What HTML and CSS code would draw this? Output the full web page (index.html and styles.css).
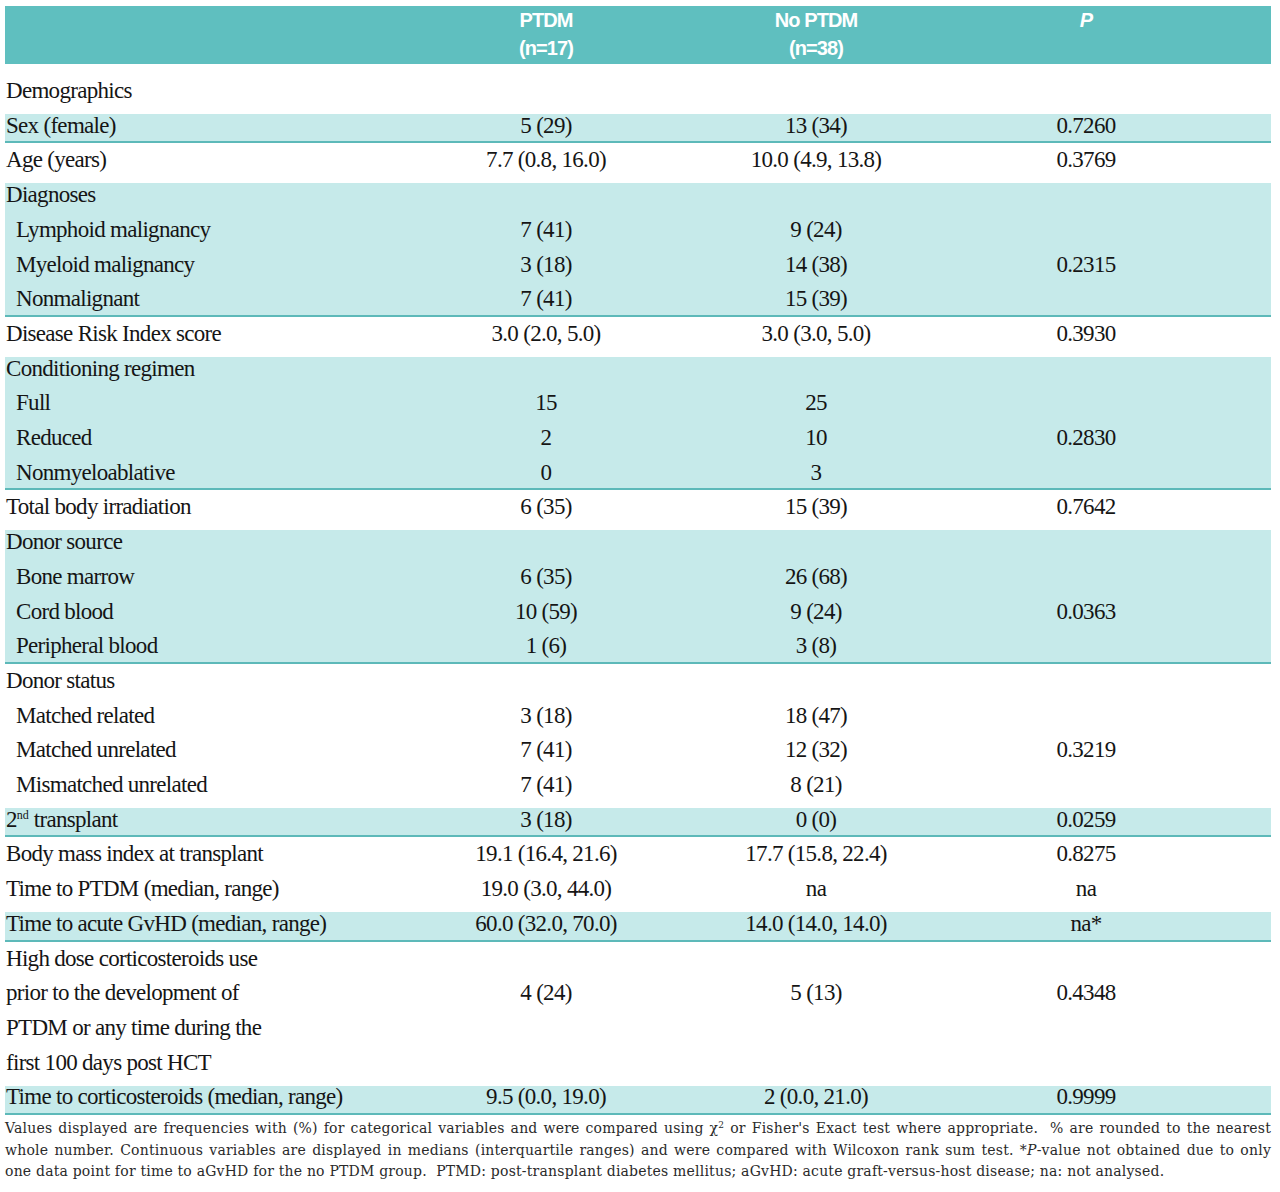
FILE: index.html
```html
<!DOCTYPE html>
<html lang="en">
<head>
<meta charset="utf-8">
<title>PTDM characteristics</title>
<link rel="stylesheet" href="styles.css">
</head>
<body>
<div class="wrap">
  <div class="head">
    <div class="hc"></div>
    <div class="hc">PTDM<br>(n=17)</div>
    <div class="hc">No PTDM<br>(n=38)</div>
    <div class="hc"><i>P</i></div>
    <div class="hc"></div>
  </div>

  <div class="body">
    <div class="row"><div class="lab">Demographics</div><div></div><div></div><div></div></div>

    <div class="band">
      <div class="row"><div class="lab">Sex (female)</div><div>5 (29)</div><div>13 (34)</div><div>0.7260</div></div>
    </div>

    <div class="row"><div class="lab">Age (years)</div><div>7.7 (0.8, 16.0)</div><div>10.0 (4.9, 13.8)</div><div>0.3769</div></div>

    <div class="band">
      <div class="row"><div class="lab">Diagnoses</div><div></div><div></div><div></div></div>
      <div class="row"><div class="lab sub">Lymphoid malignancy</div><div>7 (41)</div><div>9 (24)</div><div></div></div>
      <div class="row"><div class="lab sub">Myeloid malignancy</div><div>3 (18)</div><div>14 (38)</div><div>0.2315</div></div>
      <div class="row"><div class="lab sub">Nonmalignant</div><div>7 (41)</div><div>15 (39)</div><div></div></div>
    </div>

    <div class="row"><div class="lab">Disease Risk Index score</div><div>3.0 (2.0, 5.0)</div><div>3.0 (3.0, 5.0)</div><div>0.3930</div></div>

    <div class="band">
      <div class="row"><div class="lab">Conditioning regimen</div><div></div><div></div><div></div></div>
      <div class="row"><div class="lab sub">Full</div><div>15</div><div>25</div><div></div></div>
      <div class="row"><div class="lab sub">Reduced</div><div>2</div><div>10</div><div>0.2830</div></div>
      <div class="row"><div class="lab sub">Nonmyeloablative</div><div>0</div><div>3</div><div></div></div>
    </div>

    <div class="row"><div class="lab">Total body irradiation</div><div>6 (35)</div><div>15 (39)</div><div>0.7642</div></div>

    <div class="band">
      <div class="row"><div class="lab">Donor source</div><div></div><div></div><div></div></div>
      <div class="row"><div class="lab sub">Bone marrow</div><div>6 (35)</div><div>26 (68)</div><div></div></div>
      <div class="row"><div class="lab sub">Cord blood</div><div>10 (59)</div><div>9 (24)</div><div>0.0363</div></div>
      <div class="row"><div class="lab sub">Peripheral blood</div><div>1 (6)</div><div>3 (8)</div><div></div></div>
    </div>

    <div class="row"><div class="lab">Donor status</div><div></div><div></div><div></div></div>
    <div class="row"><div class="lab sub">Matched related</div><div>3 (18)</div><div>18 (47)</div><div></div></div>
    <div class="row"><div class="lab sub">Matched unrelated</div><div>7 (41)</div><div>12 (32)</div><div>0.3219</div></div>
    <div class="row"><div class="lab sub">Mismatched unrelated</div><div>7 (41)</div><div>8 (21)</div><div></div></div>

    <div class="band">
      <div class="row"><div class="lab">2<sup class="ord">nd</sup> transplant</div><div>3 (18)</div><div>0 (0)</div><div>0.0259</div></div>
    </div>

    <div class="row"><div class="lab">Body mass index at transplant</div><div>19.1 (16.4, 21.6)</div><div>17.7 (15.8, 22.4)</div><div>0.8275</div></div>
    <div class="row"><div class="lab">Time to PTDM (median, range)</div><div>19.0 (3.0, 44.0)</div><div>na</div><div>na</div></div>

    <div class="band">
      <div class="row"><div class="lab">Time to acute GvHD (median, range)</div><div>60.0 (32.0, 70.0)</div><div>14.0 (14.0, 14.0)</div><div>na*</div></div>
    </div>

    <div class="row"><div class="lab">High dose corticosteroids use</div><div></div><div></div><div></div></div>
    <div class="row"><div class="lab">prior to the development of</div><div>4 (24)</div><div>5 (13)</div><div>0.4348</div></div>
    <div class="row"><div class="lab">PTDM or any time during the</div><div></div><div></div><div></div></div>
    <div class="row"><div class="lab">first 100 days post HCT</div><div></div><div></div><div></div></div>

    <div class="band">
      <div class="row"><div class="lab">Time to corticosteroids (median, range)</div><div>9.5 (0.0, 19.0)</div><div>2 (0.0, 21.0)</div><div>0.9999</div></div>
    </div>
  </div>

  <div class="note">
    <div class="nl just">Values displayed are frequencies with (%) for categorical variables and were compared using <span class="chi">χ<sup>2</sup></span> or Fisher's Exact test where appropriate. &nbsp;% are rounded to the nearest</div>
    <div class="nl just">whole number. Continuous variables are displayed in medians (interquartile ranges) and were compared with Wilcoxon rank sum test. *<i>P</i>-value not obtained due to only</div>
    <div class="nl">one data point for time to aGvHD for the no PTDM group. &nbsp;PTMD: post-transplant diabetes mellitus; aGvHD: acute graft-versus-host disease; na: not analysed.</div>
  </div>
</div>
</body>
</html>
```

FILE: styles.css
```css
html, body {
  margin: 0;
  padding: 0;
  background: #ffffff;
}

.wrap {
  width: 1266px;
  padding: 6px 9px 0 5px;
}

.head {
  display: grid;
  grid-template-columns: 406px 270px 270px 270px 50px;
  background: #5fbfbf;
  height: 58px;
  padding-top: 0;
  box-sizing: border-box;
  color: #ffffff;
  font-family: "Liberation Sans Narrow", "Liberation Sans", Arial, sans-serif;
  font-stretch: condensed;
  font-weight: bold;
  font-size: 20px;
  letter-spacing: -0.9px;
  line-height: 28px;
  text-align: center;
}

.hc i {
  font-style: italic;
}

.body {
  margin-top: 10px;
  font-family: "Liberation Serif", "Times New Roman", serif;
  font-size: 23px;
  letter-spacing: -0.7px;
  color: #151515;
}

.row {
  display: grid;
  grid-template-columns: 406px 270px 270px 270px 50px;
  height: 34.71px;
  line-height: 34.71px;
  text-align: center;
  white-space: nowrap;
}

.row .lab {
  text-align: left;
  padding-left: 1px;
}

.row .lab.sub {
  padding-left: 11px;
}

.band {
  display: flow-root;
  background: #c6eaea;
  border-bottom: 2px solid #5db9b9;
  margin-top: 5.3px;
}

.band > .row:first-child {
  margin-top: -5.3px;
}

.band > .row:last-child {
  margin-bottom: -2px;
}

.ord {
  font-size: 12px;
  line-height: 0;
  vertical-align: 8px;
  letter-spacing: 0;
}

.note {
  margin-top: 3px;
  font-family: "DejaVu Serif", "Liberation Serif", serif;
  font-size: 14px;
  letter-spacing: 0.2px;
  line-height: 21.5px;
  color: #2a2a2a;
}

.nl {
  white-space: nowrap;
}

.nl.just {
  white-space: normal;
  text-align: justify;
  text-align-last: justify;
}

.chi sup {
  font-size: 9px;
  line-height: 0;
  vertical-align: 5px;
}
```
